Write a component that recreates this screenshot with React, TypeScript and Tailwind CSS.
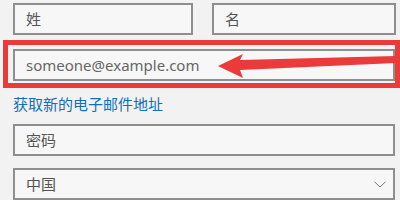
import React from "react";

const fieldClass =
  "flex items-center h-[32px] border-2 border-[#8e8e8e] bg-[#f7f7f7] pl-[11px] pr-[8px] text-[15px] text-[#555]";

export default function App() {
  return (
    <div
      className="relative w-[400px] h-[200px] overflow-hidden bg-[#f2f2f2]"
      style={{ fontFamily: '"Noto Sans", "Noto Sans CJK SC", sans-serif' }}
    >
      <div className="flex gap-[19px] pl-[13px] pt-[3px]">
        <div className={`${fieldClass} w-[180px]`}>姓</div>
        <div className={`${fieldClass} w-[184px]`}>名</div>
      </div>

      <div className="ml-[3px] mt-[5px] w-[397px] h-[48px] border-[5px] border-[#ea3a3a] pl-[5px] pt-[4px]">
        <div className={`${fieldClass} w-[382px] text-[#666]`}>someone@example.com</div>
      </div>

      <a className="block pl-[13px] mt-[6px] text-[15px] leading-[20px] text-[#0f6fb8]">获取新的电子邮件地址</a>

      <div className={`${fieldClass} ml-[13px] mt-[10px] w-[382px]`}>密码</div>

      <div className={`${fieldClass} ml-[13px] mt-[12px] w-[382px] justify-between`}>
        <span>中国</span>
        <svg width="12" height="7" viewBox="0 0 12 7" className="mr-[-1px]">
          <path d="M0.5 0.8 L6 6 L11.5 0.8" fill="none" stroke="#777" strokeWidth="1" />
        </svg>
      </div>

      <svg className="absolute left-0 top-0" width="400" height="200" viewBox="0 0 400 200">
        <polygon
          points="218,66 243,54 240,60 396,56 396,63 240,70 243,78"
          fill="#ea3a3a"
        />
      </svg>
    </div>
  );
}
